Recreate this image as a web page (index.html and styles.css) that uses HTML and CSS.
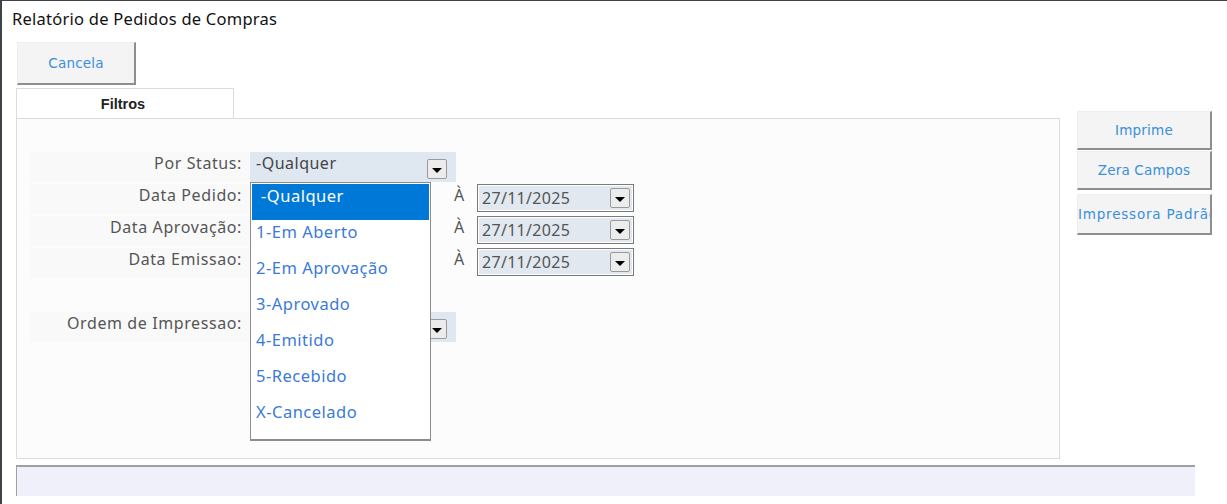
FILE: index.html
```html
<!DOCTYPE html>
<html lang="pt">
<head>
<meta charset="utf-8">
<title>Relatório de Pedidos de Compras</title>
<link rel="stylesheet" href="styles.css">
</head>
<body>
<div class="window">
  <div class="title">Relatório de Pedidos de Compras</div>
  <div class="toolbar">
    <button class="btn cancel">Cancela</button>
  </div>
  <div class="main">
    <div class="left">
      <div class="tabs"><div class="tab">Filtros</div></div>
      <div class="panel">
        <div class="form">
          <div class="row r-status">
            <div class="label">Por Status:</div>
            <div class="combo wide"><span class="val">-Qualquer</span><span class="drop"><i></i></span></div>
            <div class="list">
              <div class="item sel">-Qualquer</div>
              <div class="item">1-Em Aberto</div>
              <div class="item">2-Em Aprovação</div>
              <div class="item">3-Aprovado</div>
              <div class="item">4-Emitido</div>
              <div class="item">5-Recebido</div>
              <div class="item">X-Cancelado</div>
            </div>
          </div>
          <div class="row r-date">
            <div class="label">Data Pedido:</div>
            <div class="date first"><span class="drop"><i></i></span></div>
            <div class="a">À</div>
            <div class="date"><span class="val">27/11/2025</span><span class="drop"><i></i></span></div>
          </div>
          <div class="row r-date">
            <div class="label">Data Aprovação:</div>
            <div class="date first"><span class="drop"><i></i></span></div>
            <div class="a">À</div>
            <div class="date"><span class="val">27/11/2025</span><span class="drop"><i></i></span></div>
          </div>
          <div class="row r-date">
            <div class="label">Data Emissao:</div>
            <div class="date first"><span class="drop"><i></i></span></div>
            <div class="a">À</div>
            <div class="date"><span class="val">27/11/2025</span><span class="drop"><i></i></span></div>
          </div>
          <div class="row r-order">
            <div class="label">Ordem de Impressao:</div>
            <div class="combo wide"><span class="drop"><i></i></span></div>
          </div>
        </div>
      </div>
    </div>
    <div class="side">
      <button class="btn side-btn">Imprime</button>
      <button class="btn side-btn">Zera Campos</button>
      <button class="btn side-btn clip">Impressora Padrão</button>
    </div>
  </div>
  <div class="status"></div>
</div>
</body>
</html>
```
FILE: styles.css
```css
* { box-sizing: border-box; }
html, body { margin: 0; padding: 0; background: #ffffff; }
body { width: 1227px; height: 504px; overflow: hidden; font-family: "Noto Sans", "Open Sans", sans-serif; }

.window {
  height: 504px;
  border-top: 1px solid #3d4247;
  border-left: 2px solid #3d4247;
  background: #ffffff;
  display: flex;
  flex-direction: column;
}

.title {
  height: 41px;
  padding: 6px 0 0 10px;
  font-size: 16.5px;
  color: #111;
  letter-spacing: 0.25px;
}

.toolbar { padding-left: 15px; height: 46px; }

.btn {
  font-family: "DejaVu Sans", "Noto Sans", sans-serif;
  font-size: 13.5px;
  letter-spacing: 0.2px;
  color: #3a8fdc;
  background: #f4f4f4;
  border: 1px solid #eeeeee;
  border-right: 2px solid #8e8e8e;
  border-bottom: 2px solid #8e8e8e;
  padding: 0;
  cursor: default;
}
.cancel { width: 119px; height: 43px; }

.main { display: flex; height: 372px; }
.left { width: 1058px; padding-left: 14px; }

.tabs { height: 30px; display: flex; }
.tab {
  width: 218px;
  height: 30px;
  border: 1px solid #dcdcdc;
  border-bottom: none;
  font-family: "Liberation Sans", Arial, sans-serif;
  font-weight: bold;
  font-size: 14.5px;
  color: #222;
  text-align: center;
  line-height: 30px;
  padding-right: 4px;
}

.panel {
  width: 1044px;
  height: 341px;
  border: 1px solid #dcdcdc;
  background: #fcfcfc;
  padding: 33px 0 0 13px;
}

.form { display: flex; flex-direction: column; gap: 2px; }
.row { display: flex; align-items: stretch; position: relative; }
.r-status { height: 30px; }
.r-date { height: 30px; }
.r-order { height: 30px; margin-top: 32px; }

.label {
  width: 220px;
  padding-right: 8px;
  background: #f9f9f9;
  text-align: right;
  font-size: 16px;
  letter-spacing: 0.6px;
  color: #555;
  line-height: 22px;
  white-space: nowrap;
}

.combo {
  width: 206px;
  background: #dfe7f0;
  position: relative;
}
.combo .val {
  position: absolute; left: 6px; top: 0px;
  font-size: 16px; letter-spacing: 0.5px; color: #444;
}
.drop {
  position: absolute;
  width: 20px; height: 20px;
  border: 1px solid #9a9a9a;
  border-radius: 2px;
  background: #ececec;
  display: flex; align-items: center; justify-content: center;
}
.drop i {
  width: 0; height: 0;
  border-left: 5px solid transparent;
  border-right: 5px solid transparent;
  border-top: 5px solid #000;
  margin-top: 2px;
}
.combo .drop { right: 9px; top: 7px; }

.date {
  width: 157px;
  height: 28px;
  background: #e1e8f0;
  border: 1px solid #7a7a7a;
  box-shadow: inset 0 0 0 1px #ffffff;
  position: relative;
}
.date.first { width: 180px; }
.date .val { position: absolute; left: 4px; top: 2px; font-size: 16px; letter-spacing: 0.3px; color: #555; }
.date .drop { right: 3px; top: 3px; }

.a {
  width: 47px;
  font-size: 16px;
  color: #555;
  padding-left: 24px;
  line-height: 22px;
}

.list {
  position: absolute;
  left: 220px;
  top: 30px;
  width: 181px;
  height: 259px;
  background: #ffffff;
  border: 1px solid #8c8c8c;
  border-bottom: 2px solid #8c8c8c;
  padding: 1px 1px;
  z-index: 5;
}
.item {
  height: 36px;
  font-size: 16.5px;
  letter-spacing: 0.5px;
  color: #3b7ad8;
  padding-left: 4px;
  line-height: 24px;
  white-space: nowrap;
}
.item.sel {
  background: #0078d7;
  color: #ffffff;
  padding-left: 9px;
}

.side {
  padding: 23px 0 0 17px;
  display: flex;
  flex-direction: column;
  gap: 1px;
}
.side-btn { width: 135px; height: 39px; }
.side-btn.clip { margin-top: 3px; height: 41px; overflow: hidden; white-space: nowrap; text-align: left; padding-left: 0; letter-spacing: 0.8px; }

.status {
  margin: 5px 0 0 14px;
  width: 1179px;
  height: 31px;
  background: #eff0fa;
  border-top: 2px solid #a0a0a0;
  border-left: 1px solid #a0a0a0;
}
```
